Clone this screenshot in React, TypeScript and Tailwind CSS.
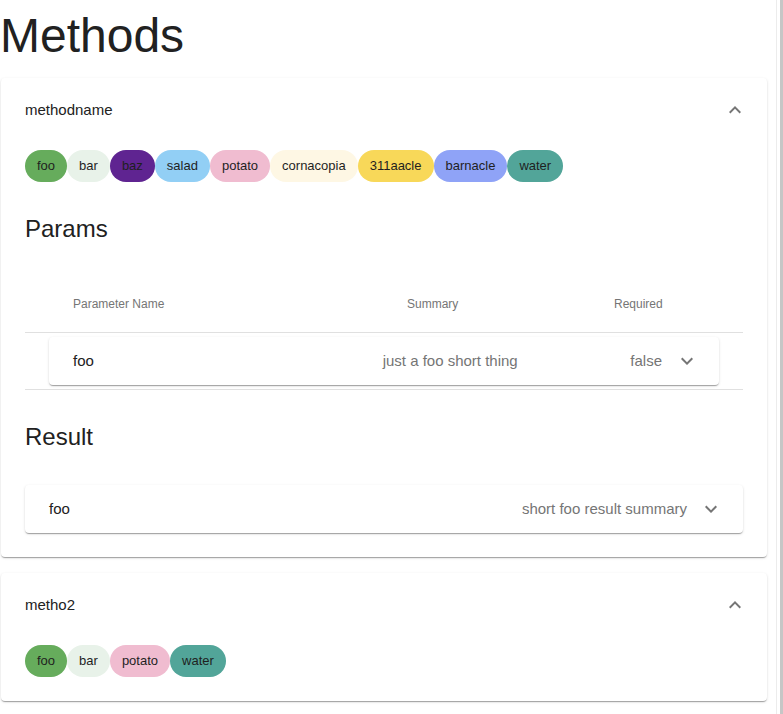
import React from 'react';

type ChipItem = { label: string; bg: string };

const firstChips: ChipItem[] = [
  { label: 'foo', bg: 'bg-[#66ac5c]' },
  { label: 'bar', bg: 'bg-[#e8f2e9]' },
  { label: 'baz', bg: 'bg-[#5f2491]' },
  { label: 'salad', bg: 'bg-[#92cff5]' },
  { label: 'potato', bg: 'bg-[#f0bcd0]' },
  { label: 'cornacopia', bg: 'bg-[#fef7e4]' },
  { label: '311aacle', bg: 'bg-[#f8d859]' },
  { label: 'barnacle', bg: 'bg-[#8fa3f7]' },
  { label: 'water', bg: 'bg-[#52a599]' },
];

const secondChips: ChipItem[] = [
  { label: 'foo', bg: 'bg-[#66ac5c]' },
  { label: 'bar', bg: 'bg-[#e8f2e9]' },
  { label: 'potato', bg: 'bg-[#f0bcd0]' },
  { label: 'water', bg: 'bg-[#52a599]' },
];

const paperShadow =
  'shadow-[0px_2px_1px_-1px_rgba(0,0,0,0.2),0px_1px_1px_0px_rgba(0,0,0,0.14),0px_1px_3px_0px_rgba(0,0,0,0.12)]';

// MUI style expand chevron
const Chevron = ({ up }: { up?: boolean }) => (
  <svg viewBox="0 0 24 24" className={up ? 'w-6 h-6 fill-[#757575] rotate-180' : 'w-6 h-6 fill-[#757575]'}>
    <path d="M16.59 8.59 12 13.17 7.41 8.59 6 10l6 6 6-6z" />
  </svg>
);

const Chips = ({ items }: { items: ChipItem[] }) => (
  <div className="flex h-8">
    {items.map((c, i) => (
      <span key={i} className={`h-8 flex items-center px-3 rounded-full text-[13px] text-[#1f1f1f] ${c.bg}`}>
        {c.label}
      </span>
    ))}
  </div>
);

const Summary = ({ title }: { title: string }) => (
  <div className="h-16 flex items-center pl-6 pr-5">
    <span className="text-[15px] text-[#222]">{title}</span>
    <span className="ml-auto">
      <Chevron up />
    </span>
  </div>
);

export default function App() {
  return (
    <div className="flex min-h-screen bg-white font-['Liberation_Sans',Arial,sans-serif] text-[#212121]">
      <div className="w-[767px] pb-4">
        <h1 className="mt-2 mb-[14px] text-[48px] leading-[56px] font-normal">Methods</h1>

        {/* methodname */}
        <div className={`ml-px bg-white rounded ${paperShadow}`}>
          <Summary title="methodname" />
          <div className="px-6 pt-2 pb-6">
            <Chips items={firstChips} />

            <h2 className="mt-[31px] text-[24px] leading-8 font-normal">Params</h2>

            <div className="mt-[30px]">
              <div className="h-[58px] flex items-center pl-12 border-b border-[#e0e0e0] text-[12px] text-[#757575]">
                <span className="w-[334px]">Parameter Name</span>
                <span className="w-[207px]">Summary</span>
                <span>Required</span>
              </div>
              <div className="px-6 py-1 border-b border-[#e0e0e0]">
                <div className={`h-12 flex items-center pl-6 pr-5 rounded bg-white text-[15px] ${paperShadow}`}>
                  <span className="w-[310px]">foo</span>
                  <span className="w-[248px] text-[#757575]">just a foo short thing</span>
                  <span className="text-[#757575]">false</span>
                  <span className="ml-[13px]">
                    <Chevron />
                  </span>
                </div>
              </div>
            </div>

            <h2 className="mt-[31px] text-[24px] leading-8 font-normal">Result</h2>

            <div className={`mt-8 h-12 flex items-center pl-6 pr-5 rounded bg-white text-[15px] ${paperShadow}`}>
              <span>foo</span>
              <span className="ml-auto text-[#757575]">short foo result summary</span>
              <span className="ml-3">
                <Chevron />
              </span>
            </div>
          </div>
        </div>

        {/* metho2 */}
        <div className={`ml-px mt-4 bg-white rounded ${paperShadow}`}>
          <Summary title="metho2" />
          <div className="px-6 pt-2 pb-6">
            <Chips items={secondChips} />
          </div>
        </div>
      </div>

      {/* right edge of the frame */}
      <div className="flex-1 flex justify-end">
        <div className="w-px bg-[#ececec]" />
        <div className="w-[3px] ml-[3px] bg-[#c6c6c6]" />
      </div>
    </div>
  );
}
